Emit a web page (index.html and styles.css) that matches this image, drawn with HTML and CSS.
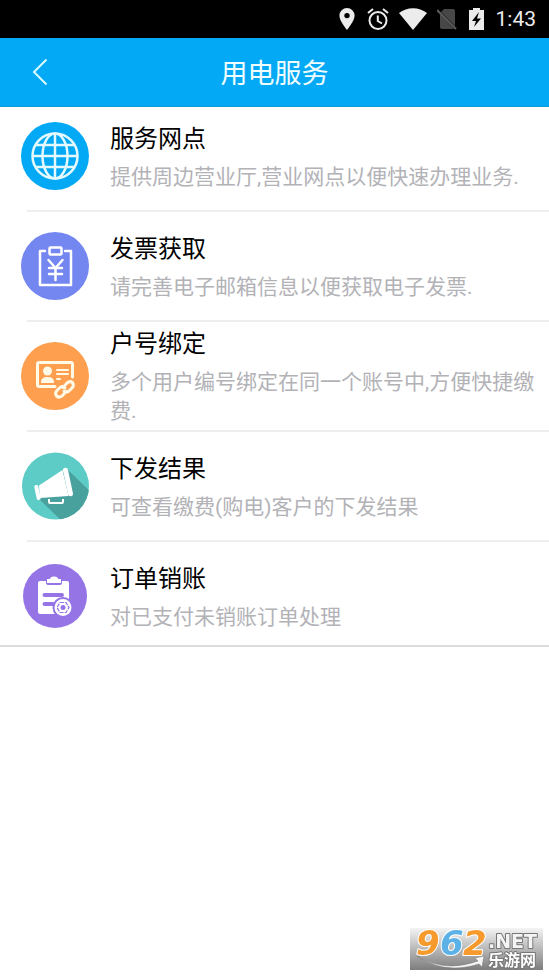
FILE: index.html
```
<!DOCTYPE html>
<html lang="zh-CN">
<head>
<meta charset="utf-8">
<meta name="viewport" content="width=device-width, initial-scale=1">
<title>用电服务</title>
<link rel="stylesheet" href="styles.css">
</head>
<body>
<div class="status">
  <svg width="16" height="22" viewBox="0 0 16 22"><path fill="#ececec" fill-rule="evenodd" d="M8 0a7.600 7.600 0 0 0-7.600 7.600C.4 13.300 8 22 8 22s7.600-8.700 7.600-14.400A7.600 7.600 0 0 0 8 0zm0 4.900a2.700 2.700 0 1 1 0 5.400 2.700 2.700 0 0 1 0-5.400z"/></svg>
  <svg width="22" height="22" viewBox="0 0 22 22" fill="none" stroke="#ececec" stroke-width="2"><circle cx="11" cy="12.500" r="8.500"/><path d="M10.800 7.500v5.500l4.200 2.500M1 5l5-4M21 5l-5-4"/></svg>
  <svg width="28" height="22" viewBox="0 0 28 22"><path fill="#ececec" d="M0 5C8-1.400 20-1.400 28 5L14 22z"/></svg>
  <svg width="20" height="22" viewBox="0 0 20 22"><path fill="#474747" d="M7 1h9q2 0 2 2v15L4 4zM3 6v13q0 2 2 2h12z"/><path d="M0 2l19 19" stroke="#5d5d5d" stroke-width="2"/></svg>
  <svg width="15" height="22" viewBox="0 0 15 22"><path fill="#ececec" d="M4 0h7v2h4v20H0V2h4z"/><path fill="#000" d="M10 4L3 13h4l-2 6 7-8.500H8z"/></svg>
  <time>1:43</time>
</div>
<header class="bar">
  <button class="back" type="button" aria-label="返回"><svg width="16" height="28" viewBox="0 0 16 28"><path d="M14.500 1.500L2 14l12.500 12.500" fill="none" stroke="#d9fbff" stroke-width="2"/></svg></button>
  <h1>用电服务</h1>
</header>
<main>
<ul class="list">
  <li><a class="row" href="#outlets">
    <svg class="icon" viewBox="0 0 68 68"><circle cx="34" cy="34" r="34" fill="#03a9f5"/><g fill="none" stroke="#e4faff" stroke-width="2.500"><circle cx="34" cy="34" r="22.500"/><ellipse cx="34" cy="34" rx="12.500" ry="22.500"/><path d="M34 11.500v45M11.500 34h45M15 23h38M15 45h38"/></g></svg>
    <div class="text"><h2>服务网点</h2><p>提供周边营业厅,营业网点以便快速办理业务.</p></div></a></li>
  <li><a class="row" href="#invoice">
    <svg class="icon" viewBox="0 0 68 68"><circle cx="34" cy="34" r="34" fill="#7486f0"/><g fill="none" stroke="#fff" stroke-width="2.500" stroke-linecap="round" stroke-linejoin="round"><path d="M24 19h-5v34h31V19h-6"/><rect x="28.500" y="15.500" width="12" height="7" rx="1"/><path d="M27.500 28l7 8 7-8M34.500 36v12M28 36h13M28 42h13"/></g></svg>
    <div class="text"><h2>发票获取</h2><p>请完善电子邮箱信息以便获取电子发票.</p></div></a></li>
  <li><a class="row" href="#bind">
    <svg class="icon" viewBox="0 0 68 68"><circle cx="34" cy="34" r="34" fill="#fd9f4e"/><g fill="none" stroke="#fff9e8" stroke-width="3" stroke-linecap="round"><path d="M34 44.500H18q-1.500 0-1.500-1.500V22q0-1.500 1.500-1.500h32q1.500 0 1.500 1.500v13"/><path stroke-width="2" d="M36 28h11M36 32h11M36 37h3"/></g><circle cx="26.500" cy="29" r="4.500" fill="#fff9e8"/><path d="M20 41v-1q0-5 6.500-5t6.500 5v1z" fill="#fff9e8"/><g fill="none" stroke="#fff9e8" stroke-width="3" stroke-linecap="round"><path d="M42 45.500l4-4.500q3-2.500 5.500-.5 2 3-.5 5.500l-3 3q-2.500 2-5 0"/><path d="M45 49.500l-3.500 4q-3 3-6 .5-2-3 .5-5.500l3-3q3-2 5 .5"/></g></svg>
    <div class="text"><h2>户号绑定</h2><p>多个用户编号绑定在同一个账号中,方便快捷缴费.</p></div></a></li>
  <li><a class="row" href="#results">
    <svg class="icon" viewBox="0 0 68 68"><defs><clipPath id="disc"><circle cx="34.500" cy="34" r="33.500"/></clipPath></defs><g clip-path="url(#disc)"><path fill="#5dcbc6" d="M0 0h68v68H0z"/><path fill="#49a19e" d="M46 17l26 25v30H44L18 47z"/></g><g fill="#fff"><path d="M18 33.500L41.500 18l6 26-28.500 2z"/><rect x="44.500" y="15.500" width="5" height="29" rx="2.500" transform="rotate(-12 47 30)"/><rect x="14.500" y="33" width="4" height="15" rx="1.500" transform="rotate(-12 16.500 40.500)"/></g><path d="M28 47v3q0 1 1 1h12q1 0 1-1v-3" fill="none" stroke="#fff" stroke-width="2"/></svg>
    <div class="text"><h2>下发结果</h2><p>可查看缴费(购电)客户的下发结果</p></div></a></li>
  <li><a class="row" href="#orders">
    <svg class="icon" viewBox="0 0 68 68"><circle cx="34" cy="34" r="32" fill="#9575e6"/><path fill="#fff" d="M19 19h6v2q0 2 2 2h12q2 0 2-2v-2h5q2 0 2 2v31H19q-2 0-2-2V21q0-2 2-2z"/><path fill="#fff" d="M26 21v-4h3q0-2.500 4-2.500t4 2.500h3v4z"/><path stroke="#9575e6" stroke-width="4" stroke-linecap="round" d="M23.500 33H41M23.500 42H32"/><circle cx="42" cy="45.500" r="10.500" fill="#9575e6"/><circle cx="42" cy="45.500" r="8.500" fill="#fff"/><path d="M39 40.500h6l3 5-3 5h-6l-3-5z" fill="none" stroke="#9575e6" stroke-width="1.200" stroke-dasharray="4 1"/><circle cx="42" cy="45.500" r="2.500" fill="#9575e6"/></svg>
    <div class="text"><h2>订单销账</h2><p>对已支付未销账订单处理</p></div></a></li>
</ul>
</main>
<svg class="mark" width="133" height="52" viewBox="0 -10 133 52" role="img" aria-label="962.NET 乐游网">
  <defs><linearGradient id="shade" x1="0" y1="0" x2="0" y2="1"><stop offset="0" stop-color="#f4f4f4"/><stop offset="1" stop-color="#7d7d7d"/></linearGradient></defs>
  <path fill="url(#shade)" d="M0 0h133v42H0z"/>
  <path d="M7 28q27 17 61 5l-3-3 9-2-2 11-3-3Q34 47 7 28z" fill="#f5f5f5" stroke="#777" stroke-width=".5"/>
  <g class="digits"><text x="6" y="27" fill="#f79a2e">9</text><text x="30" y="27" fill="#5cb2e6">6</text><text x="53" y="27" fill="#f79a2e">2</text></g>
  <text class="net" x="78" y="20">.NET</text>
  <text class="name" x="78" y="38">乐游网</text>
</svg>
</body>
</html>
```
FILE: styles.css
```
* { box-sizing: border-box; }
body {
  margin: 0;
  min-height: 100vh;
  background: #fff;
  color: #000;
  font-family: Roboto, "Noto Sans CJK SC", sans-serif;
}
svg { flex: none; display: block; }
h1, h2, p, ul { margin: 0; padding: 0; font-weight: 400; }
.status {
  display: flex;
  align-items: center;
  justify-content: flex-end;
  gap: 12px;
  height: 38px;
  padding-right: 13px;
  background: #000;
  color: #ececec;
  font-size: 21px;
}
.status svg:nth-child(3) { margin: 0 -2px; }
.bar {
  display: grid;
  grid-template-columns: 80px 1fr 80px;
  align-items: center;
  height: 69px;
  background: #03a9f5;
  border-bottom: 1px solid #1598d3;
}
.back {
  display: flex;
  justify-content: center;
  padding: 20px 0;
  border: 0;
  background: none;
}
.bar h1 {
  padding-top: 3px;
  color: #f0fdff;
  font-size: 27px;
  line-height: 40px;
  text-align: center;
}
.list { list-style: none; border-bottom: 2px solid #dcdcdc; }
.row {
  position: relative;
  display: flex;
  align-items: center;
  gap: 21px;
  min-height: 110px;
  padding: 0 0 0 21px;
  color: inherit;
  text-decoration: none;
}
.row::after {
  content: "";
  position: absolute;
  left: 27px;
  right: 0;
  bottom: -1px;
  height: 2px;
  background: #eee;
}
li:first-child .row { min-height: 104px; padding-bottom: 6px; }
li:last-child .row { min-height: 104px; padding-top: 6px; }
li:last-child .row::after { display: none; }
.icon { width: 68px; height: 68px; }
.text { flex: 1; min-width: 0; padding-top: 3px; }
.text h2 { margin-bottom: 8px; font-size: 24px; line-height: 31px; }
.text p { color: #b2b2b7; font-size: 21px; line-height: 29px; }
.mark { position: fixed; right: 6px; bottom: 6px; }
.mark text { font-family: "DejaVu Sans", "Noto Sans CJK SC", sans-serif; font-weight: 700; paint-order: stroke; stroke-linejoin: round; }
.digits text { font-size: 34px; font-style: italic; stroke: #fff; stroke-width: 2px; }
.mark .net { font-size: 19px; fill: #f4f4f4; stroke: #777; stroke-width: 2px; }
.mark .name { font-family: "Noto Sans CJK SC", sans-serif; font-size: 16px; fill: #fff; stroke: #777; stroke-width: 2px; }
```
